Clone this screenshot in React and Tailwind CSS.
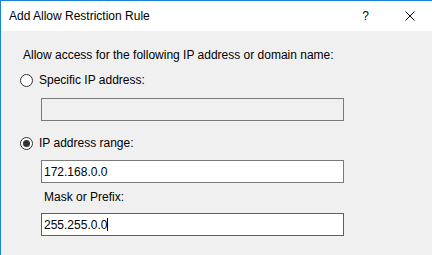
import React from 'react';

function Radio({ checked }) {
  return (
    <span className="w-[13px] h-[13px] rounded-full border border-[#333333] bg-white flex items-center justify-center shrink-0">
      {checked && <span className="w-[7px] h-[7px] rounded-full bg-[#333333]" />}
    </span>
  );
}

export default function App() {
  return (
    <div
      className="w-[432px] h-[255px] overflow-hidden flex flex-col border-l border-t border-[#1883d7] text-black text-[12px]"
      style={{ fontFamily: '"Liberation Sans", Arial, sans-serif' }}
    >
      {/* title bar */}
      <div className="h-[30px] bg-white flex items-center shrink-0">
        <span className="ml-[8px] leading-[16px]">Add Allow Restriction Rule</span>
        <span className="ml-auto mr-[36px] leading-[16px]">?</span>
        <svg width="10" height="10" viewBox="0 0 10 10" className="mr-[17px]">
          <path d="M0.5 0.5 L9.5 9.5 M9.5 0.5 L0.5 9.5" stroke="#000" strokeWidth="1" />
        </svg>
      </div>

      {/* body */}
      <div className="flex-1 bg-[#f0f0f0] flex flex-col">
        <p className="mt-[16px] ml-[22px] h-[16px] leading-[16px]">
          Allow access for the following IP address or domain name:
        </p>

        <div className="mt-[9px] ml-[19px] h-[16px] flex items-center gap-[6px]">
          <Radio />
          <span className="leading-[16px]">Specific IP address:</span>
        </div>
        <div className="mt-[10px] ml-[40px] w-[303px] h-[23px] border border-[#7a7a7a] bg-[#f0f0f0]" />

        <div className="mt-[14px] ml-[19px] h-[16px] flex items-center gap-[6px]">
          <Radio checked />
          <span className="leading-[16px]">IP address range:</span>
        </div>
        <div className="mt-[9px] ml-[40px] w-[303px] h-[23px] border border-[#7a7a7a] bg-white flex items-center pl-[2px]">
          172.168.0.0
        </div>

        <p className="mt-[6px] ml-[43px] h-[16px] leading-[16px]">Mask or Prefix:</p>
        <div className="mt-[8px] ml-[40px] w-[303px] h-[23px] border border-[#0078d7] bg-white flex items-center pl-[2px]">
          <span>255.255.0.0</span>
          <span className="w-px h-[13px] bg-black" />
        </div>
      </div>
    </div>
  );
}
